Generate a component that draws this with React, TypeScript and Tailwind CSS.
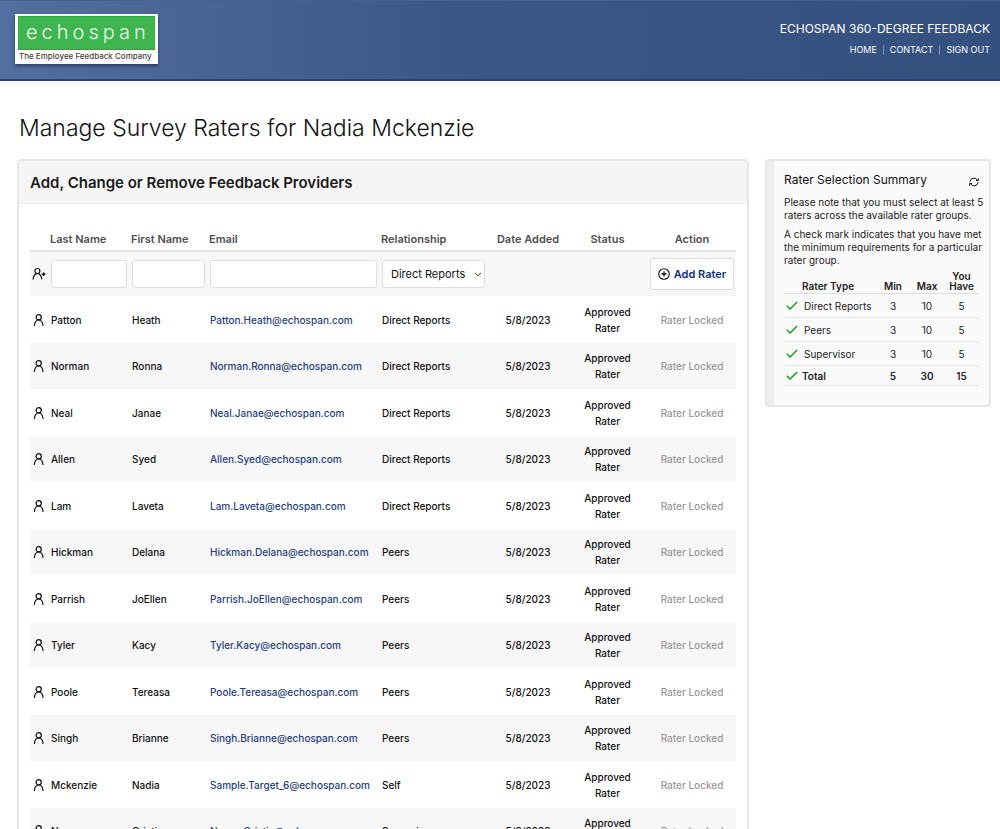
type Rater = {
  last: string;
  first: string;
  email: string;
  relationship: string;
};

const raters: Rater[] = [
  { last: 'Patton', first: 'Heath', email: 'Patton.Heath@echospan.com', relationship: 'Direct Reports' },
  { last: 'Norman', first: 'Ronna', email: 'Norman.Ronna@echospan.com', relationship: 'Direct Reports' },
  { last: 'Neal', first: 'Janae', email: 'Neal.Janae@echospan.com', relationship: 'Direct Reports' },
  { last: 'Allen', first: 'Syed', email: 'Allen.Syed@echospan.com', relationship: 'Direct Reports' },
  { last: 'Lam', first: 'Laveta', email: 'Lam.Laveta@echospan.com', relationship: 'Direct Reports' },
  { last: 'Hickman', first: 'Delana', email: 'Hickman.Delana@echospan.com', relationship: 'Peers' },
  { last: 'Parrish', first: 'JoEllen', email: 'Parrish.JoEllen@echospan.com', relationship: 'Peers' },
  { last: 'Tyler', first: 'Kacy', email: 'Tyler.Kacy@echospan.com', relationship: 'Peers' },
  { last: 'Poole', first: 'Tereasa', email: 'Poole.Tereasa@echospan.com', relationship: 'Peers' },
  { last: 'Singh', first: 'Brianne', email: 'Singh.Brianne@echospan.com', relationship: 'Peers' },
  { last: 'Mckenzie', first: 'Nadia', email: 'Sample.Target_6@echospan.com', relationship: 'Self' },
  { last: 'Nunez', first: 'Cristin', email: 'Nunez.Cristin@echospan.com', relationship: 'Supervisor' },
];

const summary = [
  { type: 'Direct Reports', min: 3, max: 10, have: 5 },
  { type: 'Peers', min: 3, max: 10, have: 5 },
  { type: 'Supervisor', min: 3, max: 10, have: 5 },
];

const PersonIcon = () => (
  <svg viewBox="0 0 14 14" className="h-3.5 w-3.5" fill="none" stroke="#111" strokeWidth="1.2" strokeLinecap="round" aria-hidden="true">
    <circle cx="5.7" cy="4.3" r="2.6" />
    <path d="M1.4 12.5C1.7 9.1 3.3 7 5.7 7s4 2.1 4.3 5.5" />
  </svg>
);

const PersonPlusIcon = () => (
  <svg viewBox="0 0 14 14" className="h-3.5 w-3.5" fill="none" stroke="#111" strokeWidth="1.2" strokeLinecap="round" aria-hidden="true">
    <circle cx="5.4" cy="4" r="2.5" />
    <path d="M1.1 12c.4-3.2 2-5.3 4.3-5.3s3.9 2.1 4.3 5.3" />
    <path d="M11.6 6v2.4M10.4 7.2h2.4" strokeWidth="1.4" />
  </svg>
);

const CheckIcon = () => (
  <svg viewBox="0 0 12 9" className="h-[9px] w-3" fill="none" stroke="#0da00d" strokeWidth="1.4" role="img" aria-label="Requirement met">
    <path d="M0.8 4.8 4 7.9 11.2 0.9" />
  </svg>
);

const RefreshIcon = () => (
  <svg viewBox="0 0 10 10" className="h-2.5 w-2.5" fill="none" stroke="#111" strokeWidth="1" aria-hidden="true">
    <path d="M0.9 4.8A4 4 0 0 1 8.4 3.2M9.1 5.2A4 4 0 0 1 1.6 6.8" />
    <path d="M9.3 1.2v2.3H7M0.7 8.8V6.5H3" />
  </svg>
);

const Logo = () => (
  <a href="#home" className="block w-[143px] bg-white px-[3px] pt-0.5 pb-[3px] shadow-[0_2px_3px_rgba(10,20,50,0.5)]">
    <svg viewBox="0 0 137 45" className="block w-full" role="img" aria-label="echospan, The Employee Feedback Company">
      <rect width="137" height="33" y="0.5" fill="#3fb54f" stroke="#22a93a" />
      <text x="8" y="23" fontSize="20" fontWeight="300" fill="#e9fbe9" letterSpacing="4">echospan</text>
      <text x="1" y="43" fontSize="8" fontWeight="500" fill="#444">The Employee Feedback Company</text>
    </svg>
  </a>
);

const Header = () => (
  <header className="flex h-[81px] items-start justify-between border-t border-b-2 border-t-[#46608f] border-b-[#28437a] bg-linear-to-r from-[#526f9f] via-[#3b5788] via-45% to-[#34507f] pr-2.5 pl-[15px]">
    <div className="pt-[13px]">
      <Logo />
    </div>
    <div className="pt-5 text-right text-white">
      <p className="text-[12px] leading-4">ECHOSPAN 360-DEGREE FEEDBACK</p>
      <nav className="mt-2 flex justify-end divide-x divide-[#8294b5] text-[9px] leading-[10px]">
        <a href="#home" className="pr-1.5">HOME</a>
        <a href="#contact" className="px-1.5">CONTACT</a>
        <a href="#signout" className="pl-1.5">SIGN OUT</a>
      </nav>
    </div>
  </header>
);

const AddRaterRow = () => (
  <tr className="h-[45px] bg-[#f7f7f7]">
    <td className="pl-0.5"><PersonPlusIcon /></td>
    <td className="pr-1 pl-px">
      <input aria-label="Last Name" className="block h-7 w-full rounded-[3px] border border-[#dedede] bg-white px-2" />
    </td>
    <td className="pr-1 pl-px">
      <input aria-label="First Name" className="block h-7 w-full rounded-[3px] border border-[#dedede] bg-white px-2" />
    </td>
    <td className="pr-1 pl-px">
      <input aria-label="Email" className="block h-7 w-full rounded-[3px] border border-[#dedede] bg-white px-2" />
    </td>
    <td className="pr-1 pl-px">
      <div className="relative">
        <select aria-label="Relationship" className="block h-7 w-full appearance-none rounded-[3px] border border-[#dedede] bg-white pl-2 text-[11px] font-normal">
          <option>Direct Reports</option>
          <option>Peers</option>
          <option>Self</option>
          <option>Supervisor</option>
        </select>
        <svg viewBox="0 0 8 5" className="pointer-events-none absolute top-3 right-[3px] h-[5px] w-2" fill="none" stroke="#333" aria-hidden="true">
          <path d="M1 0.8 4 3.8 7 0.8" />
        </svg>
      </div>
    </td>
    <td />
    <td />
    <td className="px-0.5">
      <button type="button" className="flex h-8 w-full items-center justify-center gap-1 rounded-[3px] border border-[#dedede] bg-white text-[11px] font-semibold whitespace-nowrap text-[#0f2f7f]">
        <svg viewBox="0 0 12 12" className="h-3 w-3" fill="none" stroke="#111" strokeWidth="1.1" aria-hidden="true">
          <circle cx="6" cy="6" r="5.3" />
          <path d="M6 3.5v5M3.5 6h5" strokeWidth="1.3" />
        </svg>
        Add Rater
      </button>
    </td>
  </tr>
);

const ProvidersCard = () => (
  <section className="min-w-0 flex-1 rounded-[5px] border-2 border-[#e6e6e6] bg-white">
    <h2 className="border-b border-[#e9e9e9] bg-[#f5f5f5] px-[11px] pt-3 pb-2.5 text-[15px] leading-5 font-semibold text-[#1a1a1a]">
      Add, Change or Remove Feedback Providers
    </h2>
    <div className="px-[11px] pt-6 pb-4">
      <table className="w-full table-fixed text-left text-[10px] leading-4 font-medium text-[#111]">
        <colgroup>
          <col className="w-5" />
          <col className="w-[81px]" />
          <col className="w-[78px]" />
          <col />
          <col className="w-[108px]" />
          <col className="w-[78px]" />
          <col className="w-[81px]" />
          <col className="w-[88px]" />
        </colgroup>
        <thead>
          <tr className="h-[23px] border-b-2 border-[#e2e2e2] text-[11px] text-[#505050]">
            <td />
            <th className="font-semibold">Last Name</th>
            <th className="font-semibold">First Name</th>
            <th className="font-semibold">Email</th>
            <th className="font-semibold">Relationship</th>
            <th className="text-center font-semibold">Date Added</th>
            <th className="text-center font-semibold">Status</th>
            <th className="text-center font-semibold">Action</th>
          </tr>
        </thead>
        <tbody>
          <AddRaterRow />
          {raters.map((rater, i) => (
            <tr key={rater.email} className={i % 2 ? 'h-[46px] bg-[#f7f7f7]' : 'h-[47px]'}>
              <td className="pl-[3px]"><PersonIcon /></td>
              <td className="pl-px">{rater.last}</td>
              <td className="pl-px">{rater.first}</td>
              <td className="pl-px whitespace-nowrap">
                <a href={`mailto:${rater.email}`} className="text-[#1f3f80]">{rater.email}</a>
              </td>
              <td className="pl-px">{rater.relationship}</td>
              <td className="text-center">5/8/2023</td>
              <td className="px-3 text-center">Approved Rater</td>
              <td className="text-center text-[#999]">Rater Locked</td>
            </tr>
          ))}
        </tbody>
      </table>
    </div>
  </section>
);

const SummaryCard = () => (
  <aside className="w-[226px] shrink-0 rounded-[4px] border-2 border-[#e6e6e6] bg-[#fafafa] text-[#222]">
    <div className="border-l-[7px] border-[#eee] pt-[11px] pr-2.5 pb-[19px] pl-2.5">
      <div className="flex items-center justify-between">
        <h2 className="text-[12px] leading-4 text-[#111]">Rater Selection Summary</h2>
        <button type="button" aria-label="Refresh summary" className="pt-1"><RefreshIcon /></button>
      </div>
      <div className="-mr-2 text-[10px] leading-[13px]">
        <p className="mt-2">
          Please note that you must select at least 5 raters across the available rater groups.
        </p>
        <p className="mt-1.5">
          A check mark indicates that you have met the minimum requirements for a particular rater group.
        </p>
      </div>
      <table className="mt-1 w-full table-fixed text-center text-[10px] leading-[10px]">
        <colgroup>
          <col className="w-[18px]" />
          <col />
          <col className="w-[34px]" />
          <col className="w-[34px]" />
          <col className="w-[35px]" />
        </colgroup>
        <thead>
          <tr className="border-b border-[#ddd] align-bottom">
            <td />
            <th className="pb-0.5 text-left font-semibold">Rater Type</th>
            <th className="pb-0.5 font-semibold">Min</th>
            <th className="pb-0.5 font-semibold">Max</th>
            <th className="pb-0.5 font-semibold">You Have</th>
          </tr>
        </thead>
        <tbody>
          {summary.map(row => (
            <tr key={row.type} className="h-6 border-b border-[#e6e6e6]">
              <td className="pl-0.5"><CheckIcon /></td>
              <td className="pl-0.5 text-left">{row.type}</td>
              <td>{row.min}</td>
              <td>{row.max}</td>
              <td>{row.have}</td>
            </tr>
          ))}
          <tr className="h-5 border-b border-[#e6e6e6] font-semibold">
            <td className="pl-0.5"><CheckIcon /></td>
            <td className="text-left">Total</td>
            <td>5</td>
            <td>30</td>
            <td>15</td>
          </tr>
        </tbody>
      </table>
    </div>
  </aside>
);

const App = () => (
  <div className="min-h-screen bg-white font-['Inter','Liberation_Sans',sans-serif]">
    <Header />
    <main className="pt-8 pr-[9px] pl-[17px]">
      <h1 className="pl-0.5 text-[23px] leading-[30px] font-light text-[#111]">
        Manage Survey Raters for Nadia Mckenzie
      </h1>
      <div className="mt-4 flex items-start gap-4">
        <ProvidersCard />
        <SummaryCard />
      </div>
    </main>
  </div>
);

export default App;
